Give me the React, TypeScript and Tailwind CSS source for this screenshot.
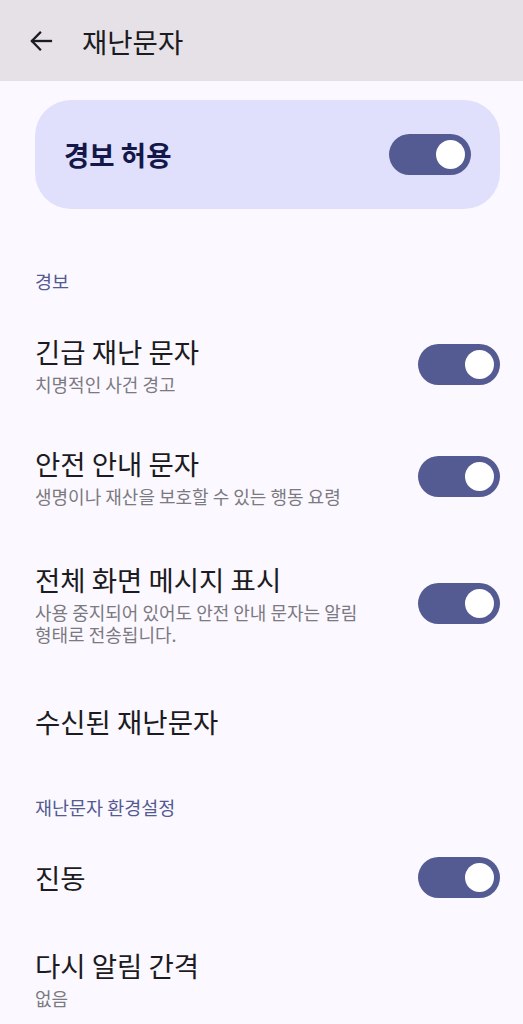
const font = { fontFamily: '"Noto Sans CJK KR", "Noto Sans", sans-serif' };

function BackArrow() {
  return (
    <svg width="28" height="28" viewBox="0 0 24 24" fill="none" stroke="#1b1b21" strokeWidth="2" strokeLinecap="square">
      <path d="M20.5 12H4.5" />
      <path d="M11.2 4.8 4.2 12l7 7.2" />
    </svg>
  );
}

function Toggle() {
  return (
    <div className="flex h-[41px] w-[82px] shrink-0 items-center justify-end rounded-full bg-[#545a92] pr-[6px]">
      <div className="h-[29px] w-[29px] rounded-full bg-white" />
    </div>
  );
}

function SectionHeader({ label, className }: { label: string; className: string }) {
  return <p className={`text-[18.5px] leading-[22px] text-[#545a92] ${className}`}>{label}</p>;
}

function Row({
  title,
  subtitle,
  toggle,
  className,
}: {
  title: string;
  subtitle?: string;
  toggle?: boolean;
  className: string;
}) {
  return (
    <div className={`flex items-center justify-between ${className}`}>
      <div className="flex-1 pr-[30px] break-keep">
        <p className="text-[27.5px] leading-[34px] text-[#1b1b21]">{title}</p>
        {subtitle && (
          <p className="mt-[5px] text-[18px] leading-[22px] text-[#7b7a81]">{subtitle}</p>
        )}
      </div>
      {toggle && <Toggle />}
    </div>
  );
}

export default function App() {
  return (
    <div className="h-[1024px] w-full overflow-hidden bg-[#fbf8ff]" style={font}>
      <header className="flex h-[81px] items-center bg-[#e5e1e6] pl-[27px]">
        <BackArrow />
        <h1 className="ml-[27px] text-[27.5px] leading-[34px] text-[#1b1b21]">재난문자</h1>
      </header>

      <main className="pl-[35px] pr-[23px]">
        <div className="mt-[19px] flex h-[109px] items-center justify-between rounded-[36px] bg-[#e0e0fd] px-[29px]">
          <span className="text-[27.5px] font-bold text-[#141848]">경보 허용</span>
          <Toggle />
        </div>

        <SectionHeader label="경보" className="pb-[17px] pt-[61px]" />
        <Row className="h-[111px]" title="긴급 재난 문자" subtitle="치명적인 사건 경고" toggle />
        <Row
          className="h-[112px]"
          title="안전 안내 문자"
          subtitle="생명이나 재산을 보호할 수 있는 행동 요령"
          toggle
        />
        <Row
          className="h-[142px]"
          title="전체 화면 메시지 표시"
          subtitle="사용 중지되어 있어도 안전 안내 문자는 알림 형태로 전송됩니다."
          toggle
        />
        <Row className="h-[94px]" title="수신된 재난문자" />

        <SectionHeader label="재난문자 환경설정" className="pb-[19px] pt-[28px]" />
        <Row className="h-[80px]" title="진동" toggle />
        <Row className="h-[123px]" title="다시 알림 간격" subtitle="없음" />
      </main>
    </div>
  );
}
